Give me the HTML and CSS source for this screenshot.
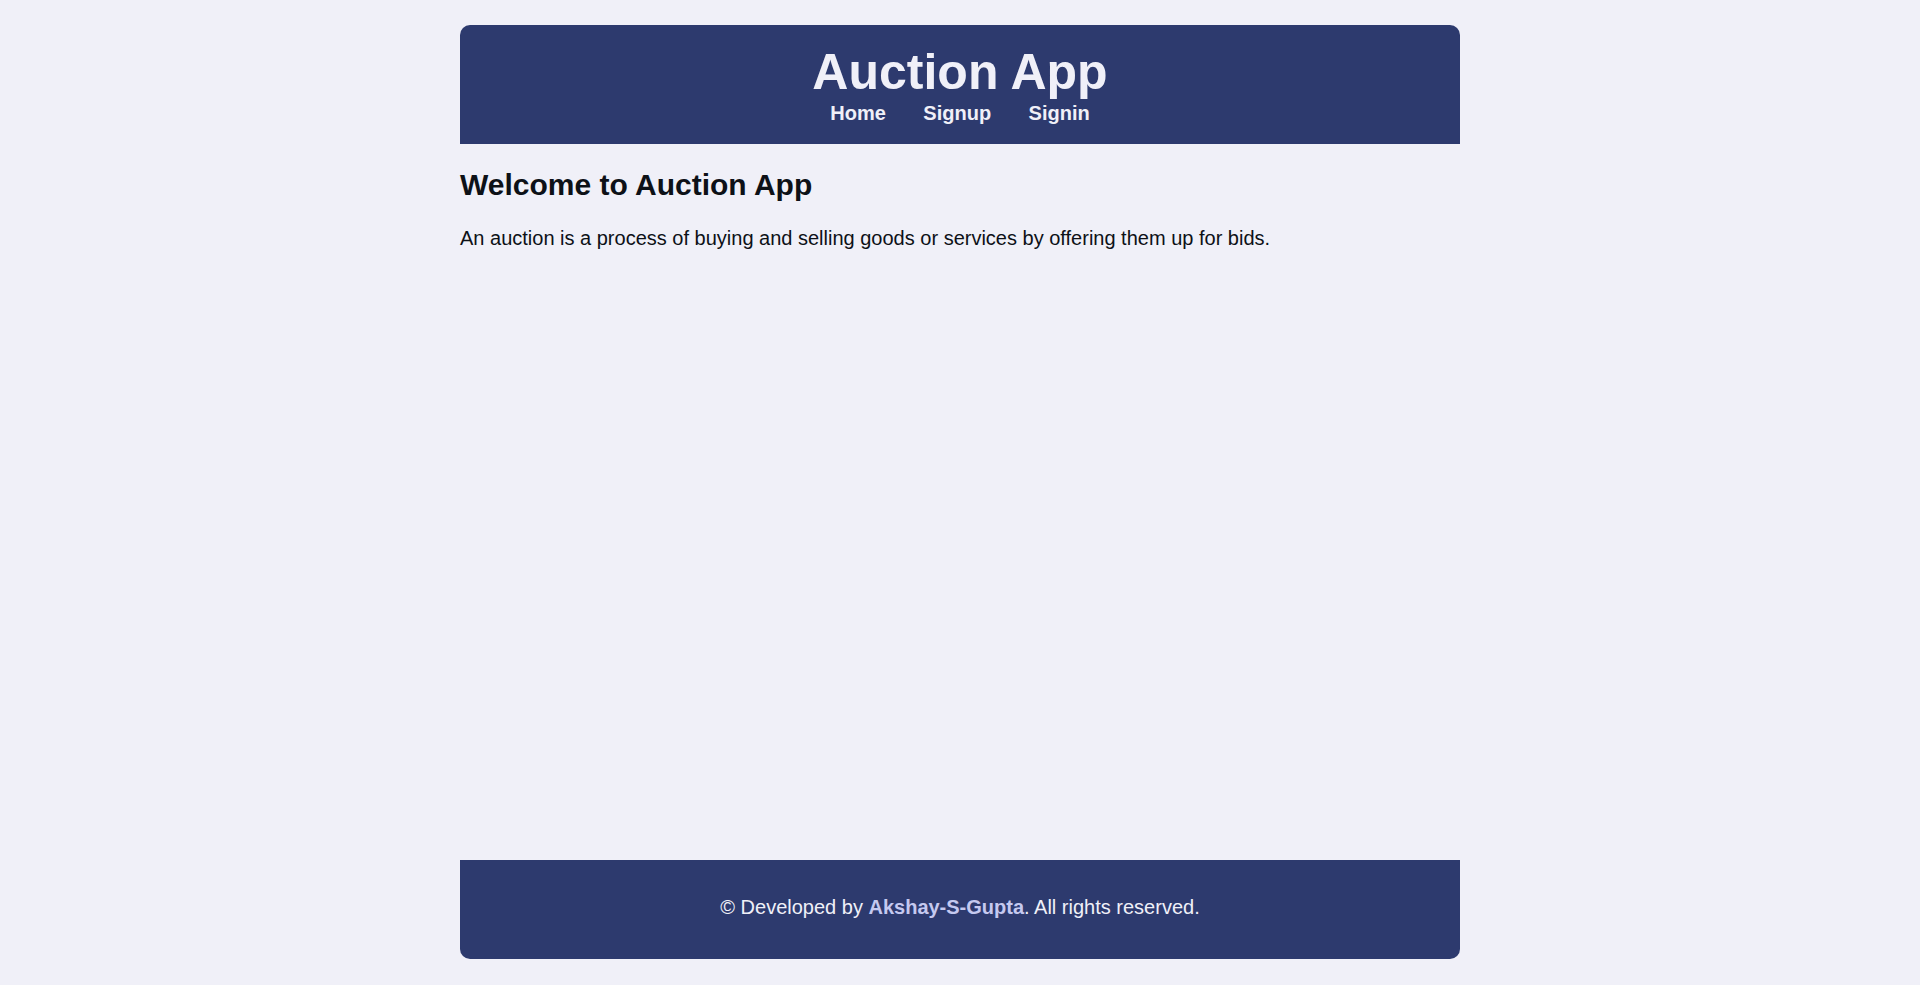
FILE: index.html
```html
<!DOCTYPE html>
<html lang="en">
<head>
<meta charset="utf-8">
<title>Auction App</title>
<link rel="stylesheet" href="styles.css">
</head>
<body>
<div class="page">
  <header class="site-header">
    <h1 class="site-title">Auction App</h1>
    <nav class="site-nav">
      <a href="#" class="nav-link">Home</a>
      <a href="#" class="nav-link">Signup</a>
      <a href="#" class="nav-link">Signin</a>
    </nav>
  </header>
  <main class="content">
    <h2 class="welcome">Welcome to Auction App</h2>
    <p class="intro">An auction is a process of buying and selling goods or services by offering them up for bids.</p>
  </main>
  <footer class="site-footer">
    <p class="footer-text">&copy; Developed by <a href="#" class="footer-link">Akshay-S-Gupta</a>. All rights reserved.</p>
  </footer>
</div>
</body>
</html>
```

FILE: styles.css
```css
html, body {
  margin: 0;
  padding: 0;
}

body {
  background: #f0f0f8;
  font-family: "Liberation Sans", Arial, sans-serif;
  color: #0d1117;
  font-size: 20px;
}

.page {
  width: 1000px;
  margin: 25px auto 0;
  min-height: 934px;
  display: flex;
  flex-direction: column;
}

.site-header {
  background: #2d3a6e;
  border-radius: 10px 10px 0 0;
  padding: 19px 20px 19.5px;
  text-align: center;
  color: #f0f0f8;
}

.site-title {
  margin: 0;
  font-size: 50px;
  font-weight: bold;
  line-height: 57.5px;
}

.site-nav {
  display: flex;
  justify-content: center;
  line-height: 23px;
}

.nav-link {
  color: #f0f0f8;
  text-decoration: none;
  font-weight: bold;
  font-size: 20px;
  margin: 0 18.75px;
}

.content {
  flex: 1;
}

.welcome {
  font-size: 30px;
  font-weight: bold;
  line-height: 34.5px;
  margin: 23.5px 0 24.5px;
}

.intro {
  margin: 0;
  line-height: 23px;
}

.site-footer {
  background: #2d3a6e;
  border-radius: 0 0 10px 10px;
  padding: 36px 20px 40px;
  text-align: center;
  color: #f0f0f8;
}

.footer-text {
  margin: 0;
  line-height: 23px;
}

.footer-link {
  color: #c5c9f0;
  font-weight: bold;
  text-decoration: none;
}
```
